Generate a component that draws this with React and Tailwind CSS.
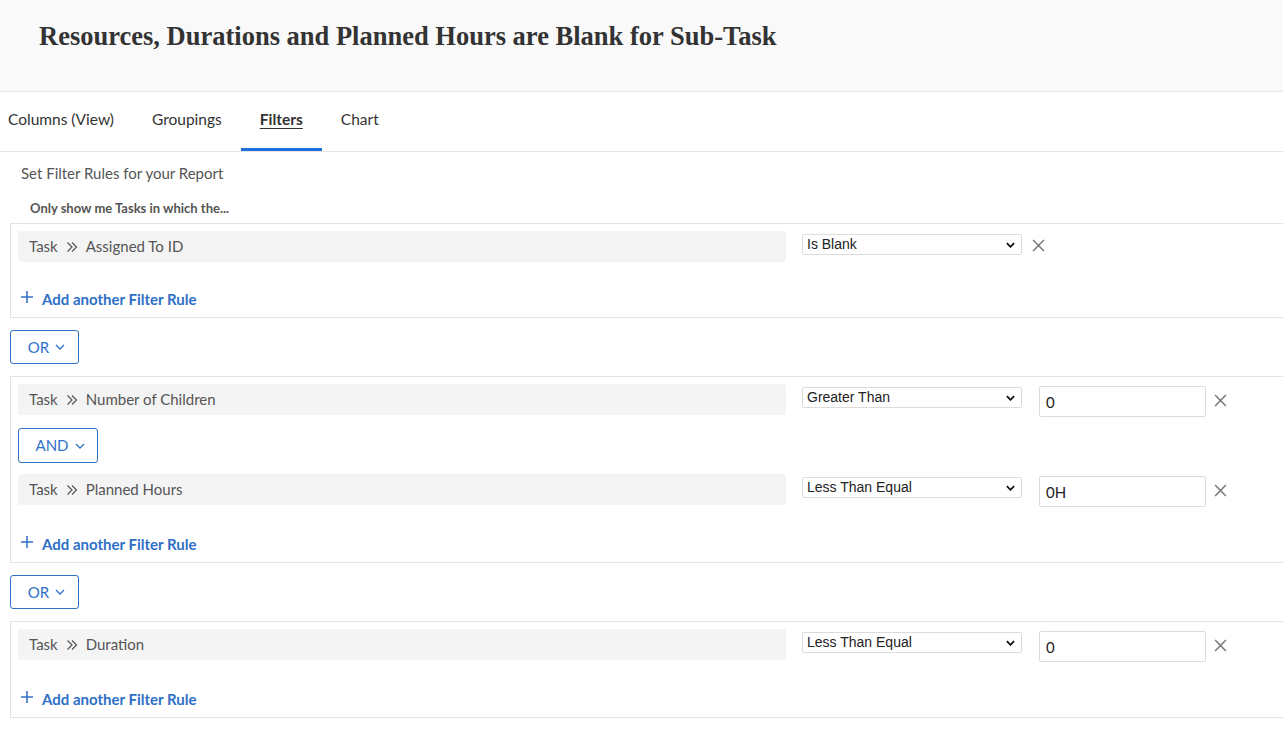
import React from "react";

const sans = { fontFamily: "Lato, 'Open Sans', sans-serif" };

const groups = [
  {
    rows: [{ field: "Assigned To ID", op: "Is Blank" }],
  },
  {
    rows: [
      { field: "Number of Children", op: "Greater Than", value: "0" },
      { field: "Planned Hours", op: "Less Than Equal", value: "0H" },
    ],
  },
  {
    rows: [{ field: "Duration", op: "Less Than Equal", value: "0" }],
  },
];

const Chevron = ({ className = "" }) => (
  <svg viewBox="0 0 10 6" className={className} fill="none" stroke="currentColor" strokeWidth="1.3">
    <path d="M1 1l4 4 4-4" />
  </svg>
);

const DoubleChevron = () => (
  <svg viewBox="0 0 12 12" className="w-[12px] h-[12px] text-[#555]" fill="none" stroke="currentColor" strokeWidth="1.2">
    <path d="M1.5 1.5l4.5 4.5-4.5 4.5M6 1.5l4.5 4.5-4.5 4.5" />
  </svg>
);

const Close = () => (
  <svg viewBox="0 0 12 12" className="w-[13px] h-[13px] text-[#777]" fill="none" stroke="currentColor" strokeWidth="1.4">
    <path d="M1 1l10 10M11 1L1 11" />
  </svg>
);

const Select = ({ value }) => (
  <div className="w-[220px] h-[21px] border border-[#dcdcdc] rounded-[2px] bg-white flex items-center justify-between pl-[4px] pr-[6px] text-[14px] text-[#222]" style={{ fontFamily: "Arial, 'Liberation Sans', sans-serif" }}>
    <span>{value}</span>
    <svg viewBox="0 0 10 6" className="w-[9px] h-[6px] text-[#111]" fill="none" stroke="currentColor" strokeWidth="2">
      <path d="M1 1l4 4 4-4" />
    </svg>
  </div>
);

const Conj = ({ label, wide }) => (
  <div className={`${wide ? "w-[80px] h-[35px]" : "w-[69px] h-[34px]"} border border-[#2f72c8] rounded-[3px] flex items-center justify-center gap-[6px] text-[15px] leading-none text-[#3172c9] bg-white`}>
    <span className="ml-[4px]">{label}</span>
    <Chevron className="w-[10px] h-[6px]" />
  </div>
);

const Row = ({ row }) => (
  <div className="flex items-start">
    <div className="w-[768px] h-[31px] bg-[#f4f4f4] rounded-[2px] flex items-center pl-[11px] gap-[8px] text-[15px] text-[#555]">
      <span>Task</span>
      <DoubleChevron />
      <span>{row.field}</span>
    </div>
    <div className="ml-[16px] mt-[3px]">
      <Select value={row.op} />
    </div>
    {row.value !== undefined ? (
      <>
        <div className="ml-[17px] mt-[2px] w-[167px] h-[31px] border border-[#dcdcdc] rounded-[2px] bg-white flex items-center pl-[6px] pt-[2px] text-[15px] text-[#222]">
          {row.value}
        </div>
        <div className="ml-[8px] mt-[10px]">
          <Close />
        </div>
      </>
    ) : (
      <div className="ml-[10px] mt-[8px]">
        <Close />
      </div>
    )}
  </div>
);

const Group = ({ group }) => (
  <div className="ml-[10px] border border-r-0 border-[#e3e3e3] pl-[7px] pt-[7px] pb-[8px]">
    <div className="flex flex-col gap-[11px]">
      {group.rows.map((row, i) => (
        <React.Fragment key={i}>
          {i > 0 && <Conj label="AND" wide />}
          <Row row={row} />
        </React.Fragment>
      ))}
    </div>
    <div className="mt-[27px] h-[20px] flex items-center gap-[9px] pl-[3px] text-[#2f6fc6] font-bold text-[15px]">
      <svg viewBox="0 0 12 12" className="w-[12px] h-[12px] -mt-[5px]" fill="none" stroke="currentColor" strokeWidth="1.5">
        <path d="M6 0v12M0 6h12" />
      </svg>
      <span>Add another Filter Rule</span>
    </div>
  </div>
);

export default function App() {
  const tabs = ["Columns (View)", "Groupings", "Filters", "Chart"];
  return (
    <div className="w-[1283px] h-[754px] bg-white overflow-hidden" style={sans}>
      {/* Header */}
      <div className="h-[92px] bg-[#f9f9f9] border-b border-[#e4e4e4] pl-[39px] pt-[16px]">
        <h1 className="text-[26.5px] leading-[40px] font-bold text-[#333]" style={{ fontFamily: "'Liberation Serif', 'Times New Roman', serif" }}>
          Resources, Durations and Planned Hours are Blank for Sub-Task
        </h1>
      </div>

      {/* Tabs */}
      <div className="h-[60px] border-b border-[#e4e4e4] flex items-stretch">
        {tabs.map((t, i) => (
          <div
            key={t}
            className={`${i === 0 ? "pl-[8px] pr-[19px]" : "px-[19px]"} flex items-center text-[15.5px] text-[#333] border-b-[3px] ${t === "Filters" ? "border-[#1f6fdb] font-bold underline underline-offset-[3px]" : "border-transparent"}`}
          >
            <span>{t}</span>
          </div>
        ))}
      </div>

      <div className="pl-[21px] pt-[10px] text-[15px] text-[#555]">Set Filter Rules for your Report</div>
      <div className="pl-[30px] pt-[14px] pb-[5px] text-[13px] font-bold text-[#555]">Only show me Tasks in which the...</div>

      <div className="flex flex-col gap-[12px]">
        {groups.map((g, i) => (
          <React.Fragment key={i}>
            {i > 0 && (
              <div className="ml-[10px]">
                <Conj label="OR" />
              </div>
            )}
            <Group group={g} />
          </React.Fragment>
        ))}
      </div>
    </div>
  );
}
